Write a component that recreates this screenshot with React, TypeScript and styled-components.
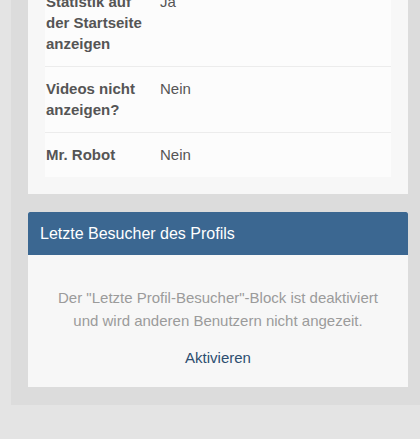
import React from "react";
import styled, { createGlobalStyle } from "styled-components";

const GlobalStyle = createGlobalStyle`
  html, body {
    margin: 0;
    padding: 0;
    background: #e4e4e4;
    font-family: "Liberation Sans", Arial, sans-serif;
  }
`;

const Page = styled.div`
  width: 420px;
  height: 439px;
  overflow: hidden;
`;

const Column = styled.div`
  width: 380px;
  margin: -54px 0 0 11px;
  padding: 17px 17px 18px;
  background: #dcdcdc;
  display: flex;
  flex-direction: column;
  gap: 18px;
  box-sizing: content-box;
`;

const Card = styled.section`
  background: #f7f7f7;
`;

const CardBody = styled.div`
  padding: 17px;
`;

const InfoTable = styled.div`
  background: #fcfcfc;
  display: flex;
  flex-direction: column;
`;

const Row = styled.div`
  display: grid;
  grid-template-columns: 115px 1fr;
  padding: 11px 0 12px;
  font-size: 15px;
  line-height: 21px;
  color: #555;

  & + & {
    border-top: 1px solid #ececec;
  }
`;

const Label = styled.div`
  font-weight: bold;
  padding: 0 12px 0 1px;
`;

const Value = styled.div``;

const Header = styled.header`
  height: 43px;
  display: flex;
  align-items: center;
  padding: 0 12px;
  background: #3b6791;
  border-radius: 2px 2px 0 0;
  color: #fff;
  font-size: 16px;
  line-height: 20px;
`;

const NoticeBody = styled.div`
  padding: 31px 20px 18px;
  text-align: center;
  display: flex;
  flex-direction: column;
  gap: 14px;
  font-size: 15px;
  line-height: 23px;
`;

const Notice = styled.p`
  margin: 0;
  color: #9b9b9b;
`;

const Link = styled.a`
  color: #2d4e70;
  text-decoration: none;
  cursor: pointer;
`;

const rows = [
  { label: "Statistik auf der Startseite anzeigen", value: "Ja" },
  { label: "Videos nicht anzeigen?", value: "Nein" },
  { label: "Mr. Robot", value: "Nein" },
];

export default function App() {
  return (
    <>
      <GlobalStyle />
      <Page>
        <Column>
          <Card>
            <CardBody>
              <InfoTable>
                {rows.map((r) => (
                  <Row key={r.label}>
                    <Label>{r.label}</Label>
                    <Value>{r.value}</Value>
                  </Row>
                ))}
              </InfoTable>
            </CardBody>
          </Card>
          <Card>
            <Header>Letzte Besucher des Profils</Header>
            <NoticeBody>
              <Notice>
                Der "Letzte Profil-Besucher"-Block ist deaktiviert
                <br />
                und wird anderen Benutzern nicht angezeit.
              </Notice>
              <div>
                <Link>Aktivieren</Link>
              </div>
            </NoticeBody>
          </Card>
        </Column>
      </Page>
    </>
  );
}
